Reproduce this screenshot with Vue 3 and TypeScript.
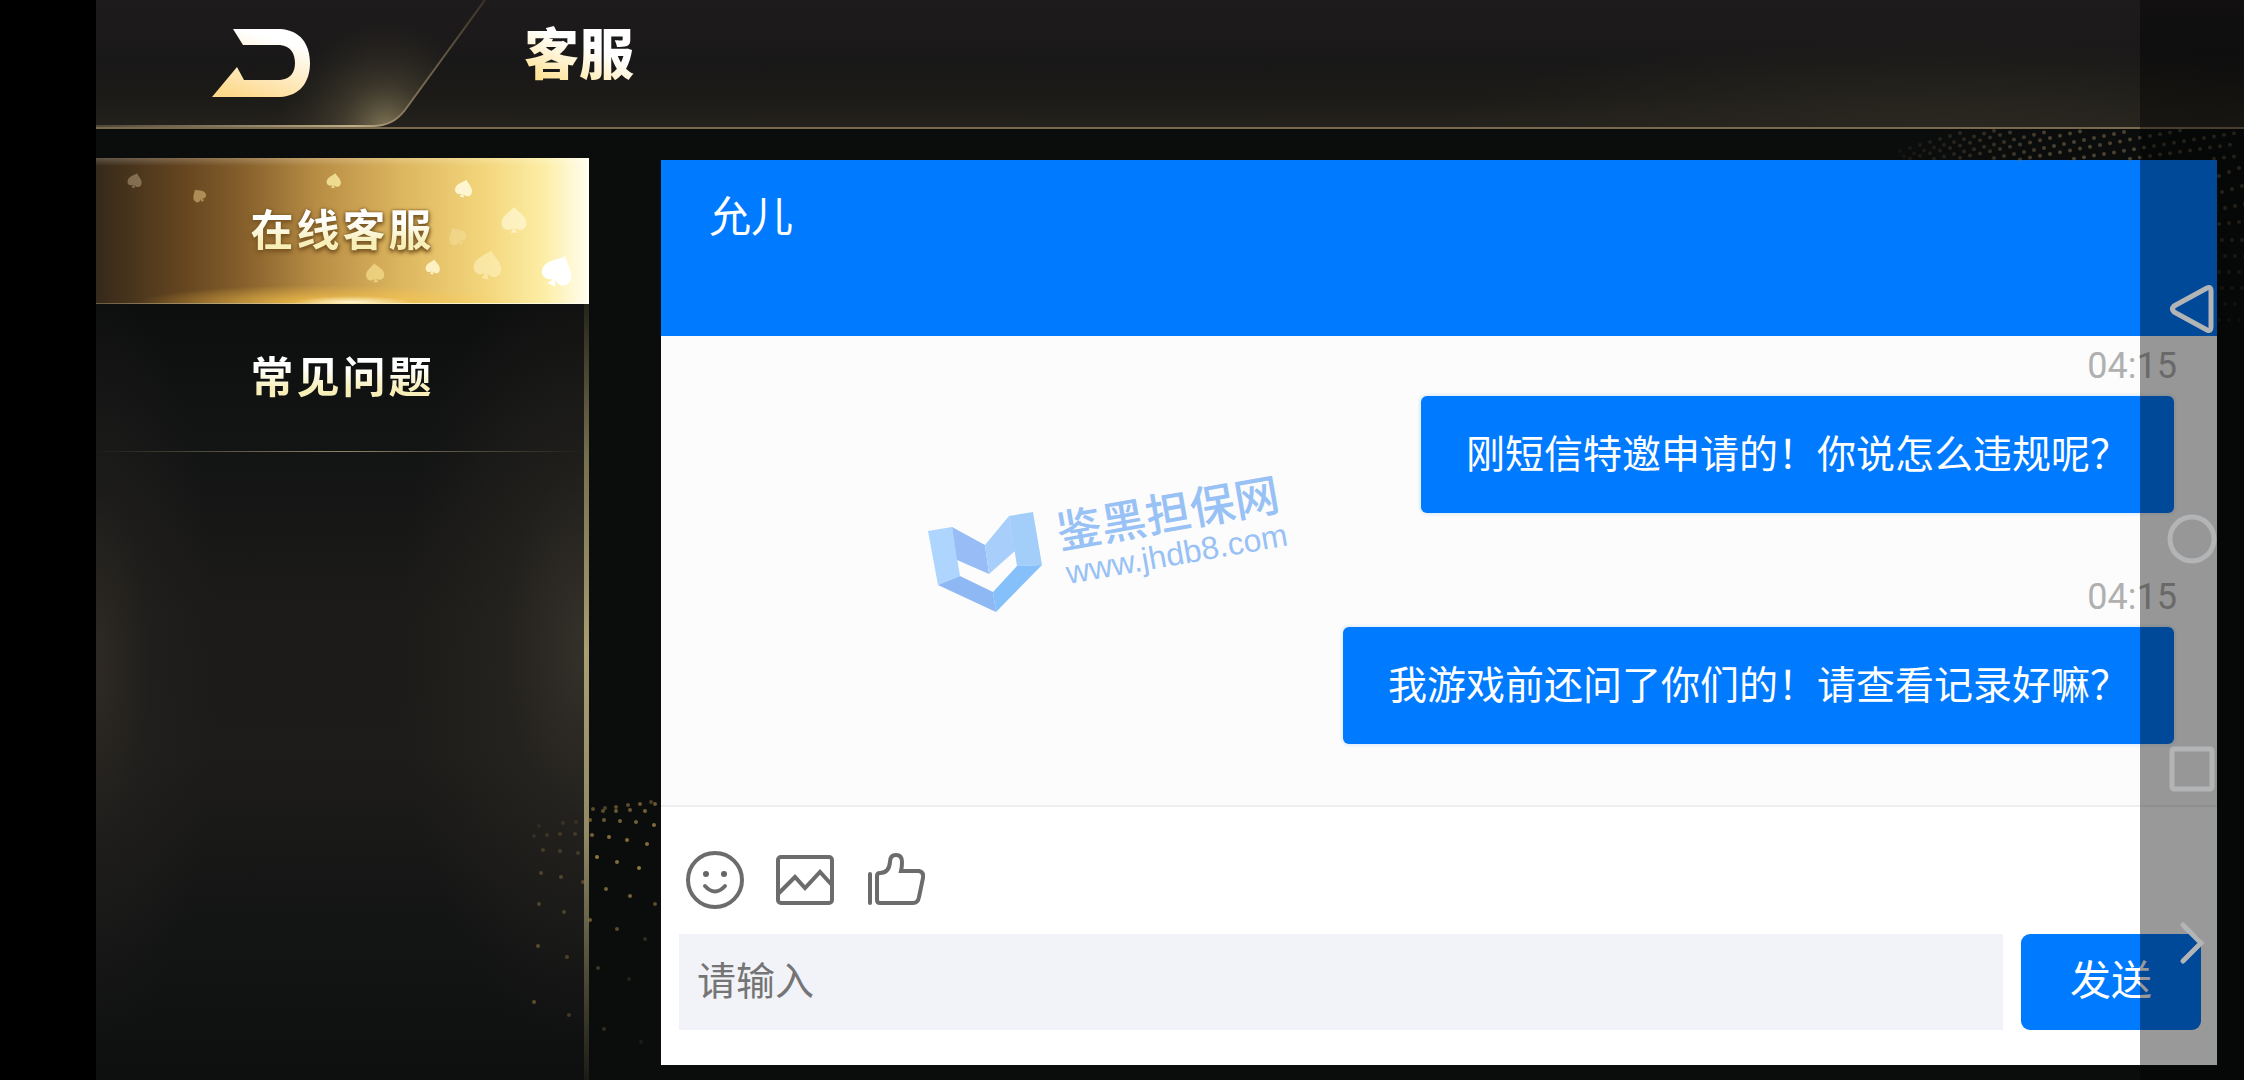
<script setup lang="ts">
import { ref } from 'vue'

interface Message {
  id: number
  time: string
  text: string
}

interface Spade {
  x: number
  y: number
  size: number
  turn: number
  color: string
  opacity: number
}

type Dot = [x: number, y: number, opacity: number]

const draft = ref('')

const messages: Message[] = [
  { id: 1, time: '04:15', text: '刚短信特邀申请的！你说怎么违规呢？' },
  { id: 2, time: '04:15', text: '我游戏前还问了你们的！请查看记录好嘛？' },
]

const spades: Spade[] = [
  { x: 39, y: 23, size: 15, turn: 15, color: '#b39d78', opacity: 0.55 },
  { x: 103, y: 38, size: 14, turn: -35, color: '#d9b878', opacity: 0.6 },
  { x: 238, y: 23, size: 15, turn: 10, color: '#f7e79c', opacity: 0.85 },
  { x: 368, y: 31, size: 18, turn: 15, color: '#fff9dc', opacity: 0.9 },
  { x: 418, y: 63, size: 26, turn: 0, color: '#fffbe0', opacity: 0.6 },
  { x: 361, y: 79, size: 19, turn: -30, color: '#f6e09c', opacity: 0.5 },
  { x: 392, y: 108, size: 29, turn: 12, color: '#fdf1c0', opacity: 0.6 },
  { x: 337, y: 110, size: 15, turn: 10, color: '#fff6cc', opacity: 0.9 },
  { x: 279, y: 116, size: 19, turn: -5, color: '#f7e08e', opacity: 0.7 },
  { x: 462, y: 114, size: 32, turn: 25, color: '#ffffff', opacity: 1 },
]

const lowerDots: Dot[] = [
  [73, 19, 0.6], [83, 21, 0.6], [85, 18, 0.5], [96, 17, 0.6], [96, 21, 0.7], [108, 15, 0.6], [110, 20, 0.7],
  [120, 14, 0.7], [125, 21, 0.8], [131, 12, 0.5], [135, 14, 0.7], [70, 30, 0.7], [84, 30, 0.7], [100, 31, 0.8],
  [116, 32, 0.8], [134, 35, 0.9], [72, 45, 0.8], [89, 47, 0.9], [107, 50, 0.9], [127, 54, 0.9], [77, 67, 1],
  [97, 72, 0.9], [119, 78, 1], [86, 99, 0.8], [110, 106, 0.8], [135, 114, 0.6], [70, 130, 0.7], [97, 139, 0.6],
  [125, 149, 0.3], [78, 178, 0.4], [109, 189, 0.2], [84, 239, 0.3], [121, 252, 0.15], [14, 46, 0.2],
  [27, 45, 0.25], [40, 44, 0.3], [55, 44, 0.3], [23, 60, 0.35], [40, 61, 0.35], [58, 63, 0.35], [21, 83, 0.45],
  [41, 87, 0.45], [63, 92, 0.5], [19, 114, 0.45], [44, 122, 0.45], [18, 156, 0.55], [47, 167, 0.45],
  [14, 212, 0.6], [49, 225, 0.4], [19, 36, 0.15], [43, 33, 0.2], [56, 32, 0.2],
]

// Rows of the upper dot wave rise to the right and fan out as they go.
const upperDots: Dot[] = []
for (let row = 0; row < 16; row++) {
  for (let col = 0; col < 34; col++) {
    const x = 20 + col * 10 + (row % 2) * 4
    const y = 22 - col * 3 + row * (5 + col / 5)
    if (y > 1 && y < 31) upperDots.push([x, y, Math.min(0.55, 0.1 + col * 0.03) * (col > 24 ? 0.8 : 1)])
  }
}
for (let row = 0; row < 10; row++) {
  for (let col = 0; col < 3; col++) {
    upperDots.push([339 + col * 10 + (row % 3) * 3, 47 + row * 16 - col * Math.max(0, 4 - row), 0.5 - row * 0.04])
  }
}
</script>

<template>
  <div class="page">
    <header class="topbar">
      <button class="back" type="button" aria-label="返回">
        <svg class="back-art" viewBox="0 0 390 129" aria-hidden="true">
          <defs>
            <radialGradient id="tabGlow" gradientUnits="userSpaceOnUse" cx="290" cy="128" r="110">
              <stop offset="0" stop-color="#8f825f" stop-opacity="0.85" />
              <stop offset="0.4" stop-color="#625941" stop-opacity="0.45" />
              <stop offset="1" stop-color="#3a352a" stop-opacity="0" />
            </radialGradient>
            <linearGradient id="tabEdge" gradientUnits="userSpaceOnUse" x1="0" y1="127" x2="390" y2="0">
              <stop offset="0" stop-color="#4e4638" />
              <stop offset="0.6" stop-color="#bfae86" />
              <stop offset="0.74" stop-color="#847459" />
              <stop offset="1" stop-color="#3a3327" />
            </linearGradient>
            <linearGradient id="arrowFill" x1="0.7" y1="0" x2="0.3" y2="1">
              <stop offset="0.15" stop-color="#ffffff" />
              <stop offset="1" stop-color="#fdd98c" />
            </linearGradient>
          </defs>
          <path d="M0 0H389L309 110Q297 126 277 126H0Z" fill="url(#tabGlow)" />
          <path d="M389 0L309 110Q297 126 277 126H0" fill="none" stroke="url(#tabEdge)" stroke-width="2" />
          <path
            d="M137 29H184C204 30 214 44 214 63S204 96 184 97H116L141 67L148 80H184C195 79 199 72 199 63S195 46 184 45H147Z"
            fill="url(#arrowFill)"
          />
        </svg>
      </button>
      <h1 class="title">客服</h1>
    </header>

    <div class="body">
      <nav class="sidebar">
        <a class="tab tab-active" href="#online">
          <svg class="spades" viewBox="0 0 493 146" preserveAspectRatio="none" aria-hidden="true">
            <path
              v-for="(s, i) in spades"
              :key="i"
              d="M12 1C9 5 2 8 2 14c0 6 6 7 9 4-.3 2-1 3-2 4h6c-1-1-1.700-2-2-4 3 3 9 2 9-4 0-6-7-9-10-13z"
              :fill="s.color"
              :opacity="s.opacity"
              :transform="`translate(${s.x} ${s.y}) rotate(${s.turn}) scale(${s.size / 21}) translate(-12 -12)`"
            />
          </svg>
          <span class="tab-text">在线客服</span>
        </a>
        <a class="tab" href="#faq"><span class="tab-text">常见问题</span></a>
      </nav>

      <main class="chat">
        <div class="chat-head">允儿</div>

        <div class="chat-log">
          <div v-for="m in messages" :key="m.id" class="message">
            <time class="stamp">{{ m.time }}</time>
            <p class="bubble">{{ m.text }}</p>
          </div>

          <svg class="watermark" viewBox="0 0 420 180" aria-hidden="true">
            <path d="M28 81L52 77L60 126L38 135Z" fill="#aed5fd" />
            <path d="M52 77L85 95L89 124L57 110Z" fill="#98bcf5" />
            <path d="M85 95L109 66L115 101L89 124Z" fill="#a8cffc" />
            <path d="M109 66L133 62L142 115L117 116Z" fill="#a3cefa" />
            <path d="M38 135L60 126L93 142L96 162Z" fill="#8db8f3" />
            <path d="M93 142L117 116L142 115L96 162Z" fill="#86c0fb" />
            <g transform="translate(160 99) rotate(-10)">
              <text class="wm-name" x="0" y="0">鉴黑担保网</text>
              <text class="wm-site" x="2" y="36">www.jhdb8.com</text>
            </g>
          </svg>
        </div>

        <form class="editor" @submit.prevent>
          <div class="tools">
            <button class="tool" type="button" aria-label="表情">
              <svg viewBox="0 0 60 60">
                <circle cx="30" cy="30" r="27" />
                <path d="M20 36Q30 47 40 36" />
                <circle class="solid" cx="21" cy="24" r="3" />
                <circle class="solid" cx="39" cy="24" r="3" />
              </svg>
            </button>
            <button class="tool" type="button" aria-label="图片">
              <svg viewBox="0 0 60 60">
                <rect x="3" y="7" width="54" height="46" rx="3" />
                <path d="M4 43L20 27L30 38L45 22L56 34" />
              </svg>
            </button>
            <button class="tool" type="button" aria-label="点赞">
              <svg viewBox="0 0 60 60">
                <path d="M5 24V53" />
                <path
                  d="M15 23Q24 23 25 12Q25 5 31 5T37 12Q37 17 36 21H54Q59 22 58 28L54 47Q53 53 48 53H15Q12 53 12 50V26Q12 23 15 23Z"
                />
              </svg>
            </button>
          </div>
          <div class="entry">
            <input v-model="draft" class="field" type="text" placeholder="请输入" aria-label="请输入" />
            <button class="send" type="submit">发送</button>
          </div>
        </form>
      </main>
    </div>

    <svg class="dots dots-lower" viewBox="0 0 141 290" aria-hidden="true">
      <circle v-for="([x, y, o], i) in lowerDots" :key="i" :cx="x" :cy="y" r="2" fill="#8f7640" :opacity="o" />
    </svg>
    <svg class="dots dots-upper" viewBox="0 0 364 240" aria-hidden="true">
      <circle v-for="([x, y, o], i) in upperDots" :key="i" :cx="x" :cy="y" r="2" fill="#806d50" :opacity="o" />
    </svg>

    <aside class="sysnav">
      <button class="key" type="button" aria-label="后退">
        <svg viewBox="0 0 50 50"><path d="M7 22L40 4Q44 2 44 7V43Q44 48 40 46L7 28Q4 25 7 22Z" /></svg>
      </button>
      <button class="key" type="button" aria-label="主屏幕">
        <svg viewBox="0 0 50 50"><circle cx="25" cy="25" r="22" /></svg>
      </button>
      <button class="key" type="button" aria-label="最近任务">
        <svg viewBox="0 0 50 50"><rect x="5" y="5" width="40" height="40" rx="2" /></svg>
      </button>
      <button class="key key-fold" type="button" aria-label="收起">
        <svg viewBox="0 0 50 50"><path d="M16 7L34 25L16 43" /></svg>
      </button>
    </aside>
  </div>
</template>

<style>
body {
  margin: 0;
  background: #000;
}
</style>

<style scoped>
.page {
  position: relative;
  display: flex;
  flex-direction: column;
  box-sizing: border-box;
  min-height: 100vh;
  padding-left: 96px;
  overflow: hidden;
  background: linear-gradient(#0b0c0c, #0b0c0c) content-box, #000;
  font-family: 'Noto Sans CJK SC', 'Noto Sans', sans-serif;
}

button {
  padding: 0;
  border: 0;
  background: none;
  font-family: inherit;
}

svg {
  display: block;
}

.topbar {
  display: flex;
  height: 127px;
  border-bottom: 2px solid #79694e;
  background: radial-gradient(ellipse 500px 90px at 86% 100%, #2a2720, transparent),
    linear-gradient(#1e1b1c, #191818 50%, #1b1a17 75%, #25221d);
}

.back-art {
  width: 390px;
  height: 129px;
}

.title {
  margin: 0 0 0 38px;
  background: linear-gradient(20deg, #ffe08c 30%, #fff 62%);
  background-clip: text;
  color: transparent;
  font-size: 55px;
  font-weight: 900;
  line-height: 100px;
}

.body {
  display: flex;
  flex: 1;
}

.sidebar {
  position: relative;
  flex: none;
  width: 493px;
  margin-top: 29px;
  background: radial-gradient(ellipse 190px 400px at 100% 53%, #35312a, #2b282380 45%, transparent),
    radial-gradient(ellipse 120px 380px at 0 55%, #2e2a23, #24222080 45%, transparent),
    linear-gradient(#0d0e0e 16%, #131414 32%, #1c1b19 50%, #1d1c1a 65%, #131414 84%, #0e0f0f);
}

.sidebar::after {
  position: absolute;
  top: 146px;
  right: 0;
  bottom: 0;
  width: 5px;
  background: linear-gradient(#26241c, #77704e 20%, #aa9f70 45%, #938a66 68%, #54503c 85%, #1c1b16);
  content: '';
}

.tab {
  position: relative;
  display: flex;
  align-items: center;
  justify-content: center;
  box-sizing: border-box;
  height: 148px;
  padding-bottom: 8px;
  border-bottom: 1px solid;
  border-image: linear-gradient(90deg, #1c1b18, #8c8468 50%, #1c1b18) 1;
  text-decoration: none;
}

.tab-active {
  height: 146px;
  border-image: linear-gradient(90deg, #6b5a42, #ffe9a8 50%, #fffef0) 1;
  background: radial-gradient(ellipse 60px 7px at 52% 100%, #fffbe0, transparent),
    radial-gradient(ellipse 190px 18px at 47% 100%, #ffc94acc, transparent),
    linear-gradient(#fff3, transparent 8px),
    linear-gradient(90deg, #35291a, #664620 18%, #86602c 30%, #b88d45 45%, #ddb65f 62%, #f3d67c 79%, #fdeea6 91%, #fffef0);
}

.spades {
  position: absolute;
  inset: 0;
  width: 100%;
  height: 100%;
}

.tab-text {
  position: relative;
  background: linear-gradient(#fff 40%, #f7eeb8 75%);
  background-clip: text;
  color: transparent;
  font-size: 43px;
  font-weight: 700;
  letter-spacing: 3px;
  line-height: 60px;
}

.tab-active .tab-text {
  filter: drop-shadow(0 2px 2px #7a5622) drop-shadow(0 0 1px #7a5622);
}

.chat {
  display: flex;
  flex: 1;
  flex-direction: column;
  margin: 31px 27px 15px 72px;
  background: #fff;
}

.chat-head {
  box-sizing: border-box;
  height: 176px;
  padding: 24px 48px;
  background: #007aff;
  color: #fff;
  font-size: 42px;
  line-height: 60px;
}

.chat-log {
  position: relative;
  display: flex;
  flex: 1;
  flex-direction: column;
  gap: 62px;
  padding: 8px 44px 60px;
  border-bottom: 2px solid #efefef;
  background: #fcfcfc;
}

.message {
  display: flex;
  flex-direction: column;
  align-items: flex-end;
}

.stamp {
  margin-right: -4px;
  margin-bottom: 8px;
  color: #b0b0b0;
  font-family: Roboto, sans-serif;
  font-size: 36px;
  line-height: 44px;
}

.bubble {
  margin: 0 -1px 0 0;
  padding: 26px 45px 32px;
  border-radius: 6px;
  background: #007aff;
  box-shadow: 0 0 3px 2px #e4eff6;
  color: #fff;
  font-size: 39px;
  line-height: 59px;
}

.watermark {
  position: absolute;
  top: 114px;
  left: 239px;
  width: 420px;
  height: 180px;
}

.wm-name {
  fill: #98c1f5;
  font-size: 45px;
  font-weight: 500;
}

.wm-site {
  fill: #98c1f5;
  font-family: 'Liberation Sans', sans-serif;
  font-size: 32px;
}

.editor {
  padding: 43px 16px 35px 18px;
}

.tools {
  display: flex;
  gap: 30px;
  margin: 0 0 24px 6px;
}

.tool,
.tool svg {
  width: 60px;
  height: 60px;
}

.tool svg {
  fill: none;
  stroke: #6c6c6c;
  stroke-width: 4;
  stroke-linecap: round;
}

.tool .solid {
  fill: #666;
  stroke: none;
}

.entry {
  display: flex;
  gap: 18px;
}

.field {
  flex: 1;
  min-width: 0;
  height: 96px;
  box-sizing: border-box;
  padding: 0 18px 8px;
  border: 0;
  border-radius: 0;
  background: #f2f3f8;
  color: #333;
  font-family: inherit;
  font-size: 39px;
}

.field::placeholder {
  color: #757575;
}

.send {
  width: 180px;
  height: 96px;
  padding-bottom: 10px;
  border-radius: 9px;
  background: #007aff;
  color: #fff;
  font-size: 41px;
}

.dots {
  position: absolute;
  pointer-events: none;
}

.dots-lower {
  bottom: 0;
  left: 520px;
  width: 141px;
  height: 290px;
}

.dots-upper {
  top: 129px;
  right: 0;
  width: 364px;
  height: 240px;
}

.sysnav {
  position: absolute;
  top: 0;
  right: 0;
  bottom: 0;
  display: flex;
  flex-direction: column;
  align-items: center;
  gap: 180px;
  box-sizing: border-box;
  width: 104px;
  padding-top: 284px;
  background: rgba(0, 0, 0, 0.4);
}

.key,
.key svg {
  width: 50px;
  height: 50px;
}

.key svg {
  fill: none;
  stroke: #b2b4b6;
  stroke-width: 5;
  stroke-linecap: round;
}

.key-fold {
  margin-top: -56px;
}
</style>
